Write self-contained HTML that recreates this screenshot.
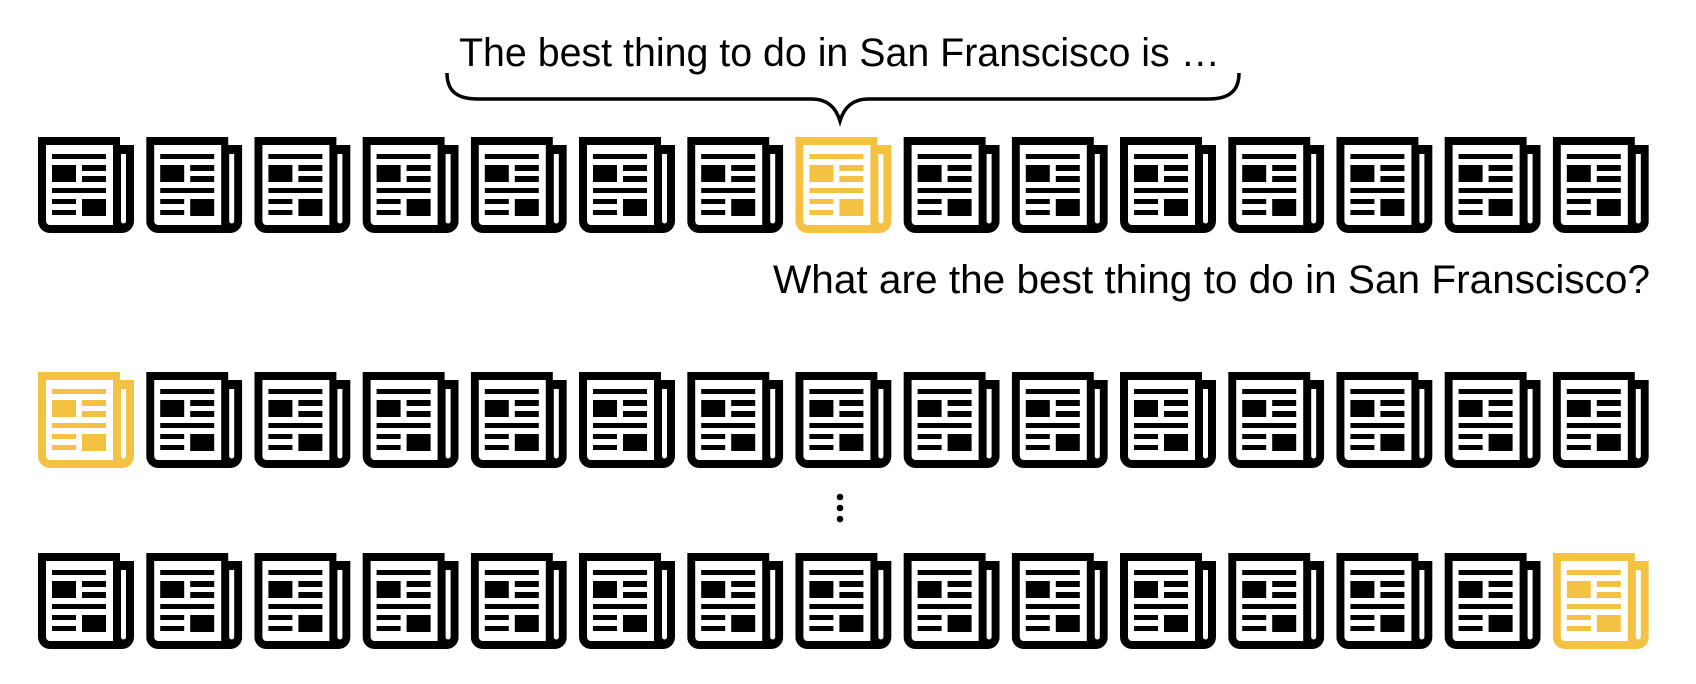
<!DOCTYPE html>
<html><head><meta charset="utf-8"><style>
html,body{margin:0;padding:0;background:#fff;}
svg{display:block;}
</style></head><body>
<svg width="1696" height="684" viewBox="0 0 1696 684" xmlns="http://www.w3.org/2000/svg">
<defs>
<symbol id="np" viewBox="0 0 96 96">
<path fill="currentColor" fill-rule="evenodd" d="M0 0H82V8H96V84A12 12 0 0 1 84 96H12A12 12 0 0 1 0 84Z M8 8V84A4 4 0 0 0 12 88H75V8Z M83 17V84A2.5 2.5 0 0 0 88 84V17Z"/>
<g fill="currentColor">
<rect x="14" y="17" width="54" height="5"/>
<rect x="14" y="28" width="24" height="17"/>
<rect x="44" y="28" width="24" height="6"/>
<rect x="44" y="39" width="24" height="6"/>
<rect x="14" y="51" width="54" height="5"/>
<rect x="14" y="62" width="24" height="5"/>
<rect x="14" y="73" width="24" height="5"/>
<rect x="44" y="62" width="24" height="17"/>
</g>
</symbol>
</defs>
<g id="icons"></g>
<text x="459" y="66" font-family="Liberation Sans, sans-serif" font-size="40" textLength="761" lengthAdjust="spacingAndGlyphs">The best thing to do in San Franscisco is …</text>
<path d="M447 73 C447 92 458 99 478 99 H812 C828 99 836 108 840 121 C844 108 852 99 868 99 H1208 C1228 99 1239 92 1239 73" fill="none" stroke="#000" stroke-width="3.5"/>
<text x="773" y="293" font-family="Liberation Sans, sans-serif" font-size="40" textLength="877" lengthAdjust="spacingAndGlyphs">What are the best thing to do in San Franscisco?</text>
<circle cx="840" cy="497" r="3.3"/>
<circle cx="840" cy="508" r="3.3"/>
<circle cx="840" cy="519" r="3.3"/>
<script>
(function(){
var g=document.getElementById('icons');var rows=[[137,7],[372,0],[553,14]];var ns='http://www.w3.org/2000/svg';
rows.forEach(function(r){for(var i=0;i<15;i++){var u=document.createElementNS(ns,'use');u.setAttribute('href','#np');u.setAttribute('x',(38+i*108.2).toFixed(1));u.setAttribute('y',r[0]);u.setAttribute('width',96);u.setAttribute('height',96);u.setAttribute('color',i===r[1]?'#F4C242':'#000');g.appendChild(u);}});
})();
</script>
</svg>
</body></html>
